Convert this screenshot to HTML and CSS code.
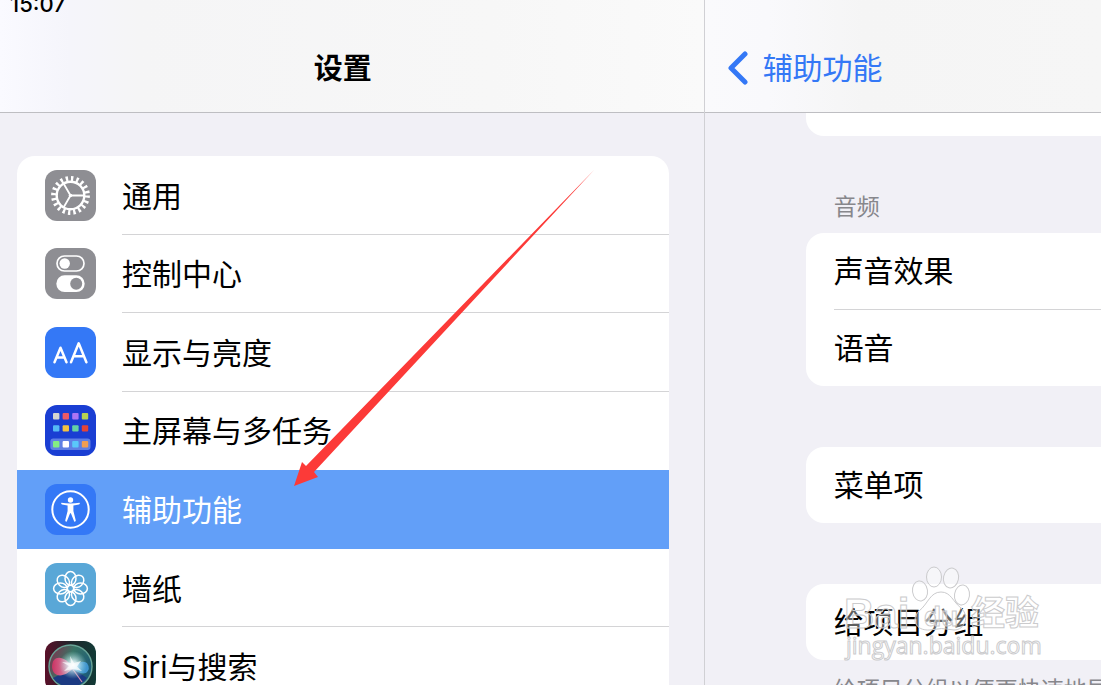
FILE: index.html
```html
<!DOCTYPE html>
<html lang="zh-CN">
<head>
    <meta charset="UTF-8">
    <meta name="viewport" content="width=device-width, initial-scale=1.0">
    <title>设置</title>
    <link rel="stylesheet" href="styles.css">
</head>
<body>
    <div class="app">
        <aside class="sidebar">
            <header class="bar sidebar-bar">
                <time class="clock">15:07</time>
                <h1>设置</h1>
            </header>
            <nav class="sidebar-body">
                <ul class="menu">
                    <li>
                        <a class="menu-item" href="#">
                            <svg class="icon" viewBox="0 0 51 51">
                                <rect width="51" height="51" rx="12" fill="#8e8e93"/>
                                <circle cx="25.5" cy="25.5" r="16.6" fill="none" stroke="#fff" stroke-width="5.6" stroke-dasharray="2.3 2.915"/>
                                <circle cx="25.5" cy="25.5" r="13.8" fill="none" stroke="#fff" stroke-width="2.4"/>
                                <path d="M25.5 25.5H39M25.5 25.5L18.7 13.8M25.5 25.5L18.7 37.2" stroke="#fff" stroke-width="1.8"/>
                                <circle cx="25.5" cy="25.5" r="1.8" fill="#fff"/>
                            </svg>
                            <span class="name">通用</span>
                        </a>
                    </li>
                    <li>
                        <a class="menu-item" href="#">
                            <svg class="icon" viewBox="0 0 51 51">
                                <rect width="51" height="51" rx="12" fill="#8e8e93"/>
                                <rect x="12" y="8" width="27" height="15" rx="7.5" fill="none" stroke="#fff" stroke-width="1.7"/>
                                <circle cx="19.7" cy="15.5" r="5.2" fill="#fff"/>
                                <rect x="11.3" y="27.3" width="28.4" height="16.8" rx="8.4" fill="#fff"/>
                                <circle cx="31.2" cy="35.7" r="6" fill="#8e8e93"/>
                            </svg>
                            <span class="name">控制中心</span>
                        </a>
                    </li>
                    <li>
                        <a class="menu-item" href="#">
                            <svg class="icon" viewBox="0 0 51 51">
                                <rect width="51" height="51" rx="12" fill="#3478f6"/>
                                <g fill="none" stroke="#fff" stroke-width="2.5" stroke-linecap="round" stroke-linejoin="round">
                                    <path d="M9.5 35.3L15.5 20.7L21.5 35.3M11.5 30.6H19.5"/>
                                    <path d="M26 35.3L33.7 16.3L41.4 35.3M28.5 29.2H39"/>
                                </g>
                            </svg>
                            <span class="name">显示与亮度</span>
                        </a>
                    </li>
                    <li>
                        <a class="menu-item no-line" href="#">
                            <svg class="icon" viewBox="0 0 51 51">
                                <rect width="51" height="51" rx="12" fill="#1a3ed3"/>
                                <rect x="5.3" y="33.6" width="40.2" height="11.4" rx="3" fill="#5f7fe4"/>
                                <rect x="8" y="8" width="6.4" height="6.4" rx="1" fill="#d5d5d0"/>
                                <rect x="17.6" y="8" width="6.4" height="6.4" rx="1" fill="#ed5a65"/>
                                <rect x="27.2" y="8" width="6.4" height="6.4" rx="1" fill="#ad74f4"/>
                                <rect x="36.8" y="8" width="6.4" height="6.4" rx="1" fill="#b8d451"/>
                                <rect x="8" y="20.2" width="6.4" height="6.4" rx="1" fill="#55b9f5"/>
                                <rect x="17.6" y="20.2" width="6.4" height="6.4" rx="1" fill="#f5c242"/>
                                <rect x="27.2" y="20.2" width="6.4" height="6.4" rx="1" fill="#65d3a4"/>
                                <rect x="36.8" y="20.2" width="6.4" height="6.4" rx="1" fill="#e64436"/>
                                <rect x="8" y="36" width="6.4" height="6.4" rx="1" fill="#84ed83"/>
                                <rect x="17.6" y="36" width="6.4" height="6.4" rx="1" fill="#fff"/>
                                <rect x="27.2" y="36" width="6.4" height="6.4" rx="1" fill="#5ac8fa"/>
                                <rect x="36.8" y="36" width="6.4" height="6.4" rx="1" fill="#f29e52"/>
                            </svg>
                            <span class="name">主屏幕与多任务</span>
                        </a>
                    </li>
                    <li>
                        <a class="menu-item selected no-line" href="#" aria-current="page">
                            <svg class="icon" viewBox="0 0 51 51">
                                <rect width="51" height="51" rx="12" fill="#3478f6"/>
                                <circle cx="25.5" cy="25.5" r="18.2" fill="none" stroke="#fff" stroke-width="2"/>
                                <circle cx="25.5" cy="16" r="2.7" fill="#fff"/>
                                <path fill="#fff" d="M16.4 18.8Q15.7 20 17 20.5L22.6 21.5V27L20.2 36.6Q20.4 38.2 21.8 37.6L25.1 29.3H25.9L29.2 37.6Q30.6 38.2 30.8 36.6L28.4 27V21.5L34 20.5Q35.3 20 34.6 18.8Q25.5 20.2 16.4 18.8Z"/>
                            </svg>
                            <span class="name">辅助功能</span>
                        </a>
                    </li>
                    <li>
                        <a class="menu-item" href="#">
                            <svg class="icon" viewBox="0 0 51 51">
                                <rect width="51" height="51" rx="12" fill="#59a7d7"/>
                                <g fill="none" stroke="#fff" stroke-width="1.5">
                                    <ellipse cx="25.5" cy="15.4" rx="5.5" ry="6.8"/>
                                    <ellipse cx="25.5" cy="15.4" rx="5.5" ry="6.8" transform="rotate(45 25.5 25.5)"/>
                                    <ellipse cx="25.5" cy="15.4" rx="5.5" ry="6.8" transform="rotate(90 25.5 25.5)"/>
                                    <ellipse cx="25.5" cy="15.4" rx="5.5" ry="6.8" transform="rotate(135 25.5 25.5)"/>
                                    <ellipse cx="25.5" cy="15.4" rx="5.5" ry="6.8" transform="rotate(180 25.5 25.5)"/>
                                    <ellipse cx="25.5" cy="15.4" rx="5.5" ry="6.8" transform="rotate(225 25.5 25.5)"/>
                                    <ellipse cx="25.5" cy="15.4" rx="5.5" ry="6.8" transform="rotate(270 25.5 25.5)"/>
                                    <ellipse cx="25.5" cy="15.4" rx="5.5" ry="6.8" transform="rotate(315 25.5 25.5)"/>
                                    <circle cx="25.5" cy="25.5" r="3.2"/>
                                </g>
                            </svg>
                            <span class="name">墙纸</span>
                        </a>
                    </li>
                    <li>
                        <a class="menu-item" href="#">
                            <svg class="icon" viewBox="0 0 51 51">
                                <defs>
                                    <linearGradient id="siri-bg">
                                        <stop offset="0" stop-color="#5a1029"/>
                                        <stop offset="0.5" stop-color="#20252b"/>
                                        <stop offset="1" stop-color="#113a36"/>
                                    </linearGradient>
                                    <linearGradient id="siri-orb" x2="1" y2="0.5">
                                        <stop offset="0" stop-color="#8f2449"/>
                                        <stop offset="0.5" stop-color="#387465"/>
                                        <stop offset="1" stop-color="#1d5c78"/>
                                    </linearGradient>
                                    <linearGradient id="siri-pink">
                                        <stop offset="0" stop-color="#c93363"/>
                                        <stop offset="1" stop-color="#e0a0bb"/>
                                    </linearGradient>
                                    <radialGradient id="siri-glow">
                                        <stop offset="0" stop-color="#fff"/>
                                        <stop offset="0.3" stop-color="#e8fbff" stop-opacity="0.8"/>
                                        <stop offset="1" stop-color="#9fe0dc" stop-opacity="0"/>
                                    </radialGradient>
                                </defs>
                                <rect width="51" height="51" rx="12" fill="url(#siri-bg)"/>
                                <circle cx="25.5" cy="25.5" r="21.5" fill="url(#siri-orb)" stroke="#68a497" stroke-width="1.4"/>
                                <path fill="#1b3a82" d="M8 37Q20 31 27 27L42 37Q35 46 25 46Q13 45 8 37Z"/>
                                <path fill="url(#siri-pink)" d="M7 26C7 13 20 14 28 27C21 36 8 38 7 26Z"/>
                                <path fill="#3f94ce" d="M27 27Q35 18 42 22Q46 28 41 32Q35 34 27 27Z"/>
                                <path stroke="#d48bb1" stroke-width="1.2" d="M27 27L37 41"/>
                                <circle cx="28" cy="24" r="14" fill="url(#siri-glow)"/>
                                <path fill="#fff" opacity="0.7" d="M25 15L29 22L36 20L32 25.500L37 30L28 28L19 30L24 25L17 21L26 22Z"/>
                            </svg>
                            <span class="name">Siri与搜索</span>
                        </a>
                    </li>
                </ul>
            </nav>
        </aside>

        <main class="detail">
            <header class="bar detail-bar">
                <a class="back" href="#">
                    <svg class="chevron" viewBox="0 0 22 34">
                        <path d="M18 3L4 17L18 31" fill="none" stroke="#3478f6" stroke-width="5" stroke-linecap="round" stroke-linejoin="round"/>
                    </svg>
                    辅助功能
                </a>
            </header>
            <div class="detail-body">
                <div class="card card-end"></div>
                <h2 class="caption">音频</h2>
                <div class="card">
                    <a class="row" href="#">声音效果</a>
                    <a class="row" href="#">语音</a>
                </div>
                <div class="card">
                    <a class="row" href="#">菜单项</a>
                </div>
                <div class="card card-noted">
                    <a class="row" href="#">给项目分组</a>
                </div>
                <p class="note">给项目分组以便更快速地导航</p>
            </div>
        </main>
    </div>

    <!-- pointer to the selected item -->
    <svg class="arrow" viewBox="0 0 302 318" aria-hidden="true">
        <path fill="#fc3a38" d="M1 317L9 293L13 297L301.5 0.5L21 303L25 308Z"/>
    </svg>

    <svg class="watermark" viewBox="0 0 204 100" aria-hidden="true">
        <g>
            <ellipse cx="78" cy="25" rx="7.5" ry="10" transform="rotate(-8 78 25)"/>
            <ellipse cx="92" cy="11" rx="7.5" ry="10"/>
            <ellipse cx="109" cy="12" rx="7.5" ry="10" transform="rotate(12 109 12)"/>
            <ellipse cx="120" cy="29" rx="7.5" ry="10" transform="rotate(8 120 29)"/>
            <path d="M99 26C109 26 111 36 119 42C128 50 123 64 112 64Q99 61 88 64C73 65 69 53 77 45C86 38 88 26 99 26Z"/>
        </g>
        <text class="mark-logo" x="2" y="62">Bai</text>
        <text class="mark-du" x="82" y="60">du</text>
        <text class="mark-cn" x="129" y="59">经验</text>
        <text class="mark-url" x="4" y="88">jingyan.baidu.com</text>
    </svg>
</body>
</html>
```
FILE: styles.css
```css
* {
    box-sizing: border-box;
    margin: 0;
    padding: 0;
}

body {
    height: 100vh;
    overflow: hidden;
    position: relative;
    background: #f1f0f6;
    color: #000;
    font-family: Inter, "Noto Sans CJK SC", sans-serif;
    font-size: 30px;
    line-height: 40px;
}

a {
    color: inherit;
    text-decoration: none;
}

.app {
    display: flex;
    height: 100%;
}

/* left and right panes */
.sidebar {
    flex: 0 0 64%;
    display: flex;
    flex-direction: column;
    overflow: hidden;
    border-right: 1px solid #d0d0d4;
}

.detail {
    flex: 1;
    min-width: 0;
    display: flex;
    flex-direction: column;
    overflow: hidden;
}

.bar {
    flex: none;
    height: 113px;
    border-bottom: 1px solid #bebec2;
}

.sidebar-bar {
    padding: 0 35px 0 17px;
    background: linear-gradient(90deg, #fafaff, #f5f5fb 10%, #f5f5f6 20%, #f7f7f7 70%, #fafafa);
}

.clock {
    display: block;
    margin: -8px 0 0 -7px;
    font-size: 22px;
    font-weight: 500;
    line-height: 24px;
}

h1 {
    margin-top: 33px;
    font-size: 29px;
    font-weight: 700;
    line-height: 40px;
    text-align: center;
}

/* settings list */
.sidebar-body {
    padding: 43px 35px 0 17px;
}

.menu {
    display: grid;
    grid-auto-rows: 1fr;
    height: 550px;
    border-radius: 18px;
    background: #fff;
    overflow: hidden;
    list-style: none;
}

.menu-item {
    display: flex;
    align-items: center;
    gap: 26px;
    height: 100%;
    padding-left: 28px;
}

.icon {
    flex: none;
    width: 51px;
    height: 51px;
}

.name {
    flex: 1;
    display: flex;
    align-items: center;
    height: 100%;
    padding-top: 2px;
    border-bottom: 1px solid #d4d4d6;
}

.no-line .name {
    border-bottom-color: transparent;
}

.selected {
    background: #629ff8;
    color: #fff;
}

/* detail pane */
.detail-bar {
    padding: 48px 0 0 22px;
    background: linear-gradient(90deg, #fafafc, #f9f9fc 16%, #f5f5f5 40%, #f6f6f6);
}

.back {
    display: flex;
    align-items: center;
    gap: 14px;
    color: #3478f6;
}

.chevron {
    width: 22px;
    height: 34px;
}

.detail-body {
    padding-left: 101px;
}

.card {
    margin-bottom: 61px;
    border-radius: 18px 0 0 18px;
    background: #fff;
}

.card-end {
    height: 23px;
    margin-bottom: 54px;
    border-radius: 0 0 0 18px;
}

.card-noted {
    margin-bottom: 13px;
}

.row {
    display: block;
    margin-left: 28px;
    padding: 18px 0;
}

.row + .row {
    border-top: 1px solid #d4d4d6;
}

.caption, .note {
    margin-left: 28px;
    color: #87878c;
    font-size: 23px;
    font-weight: 400;
    line-height: 34px;
    white-space: nowrap;
}

.caption {
    margin-bottom: 9px;
}

/* overlays */
.arrow {
    position: absolute;
    left: 293px;
    top: 169px;
    width: 302px;
    height: 318px;
}

.watermark {
    position: absolute;
    left: 842px;
    top: 566px;
    width: 204px;
    height: 100px;
    fill: rgba(255, 255, 255, 0.4);
    stroke: #cbcbcd;
    stroke-width: 1px;
    overflow: visible;
}

.mark-logo {
    font: 700 42px "Liberation Sans", sans-serif;
}

.mark-du {
    font: 700 28px "Liberation Sans", sans-serif;
}

.mark-cn {
    font: 700 34px "Noto Sans CJK SC", sans-serif;
}

.mark-url {
    font: 400 23px "Open Sans", sans-serif;
}
```
